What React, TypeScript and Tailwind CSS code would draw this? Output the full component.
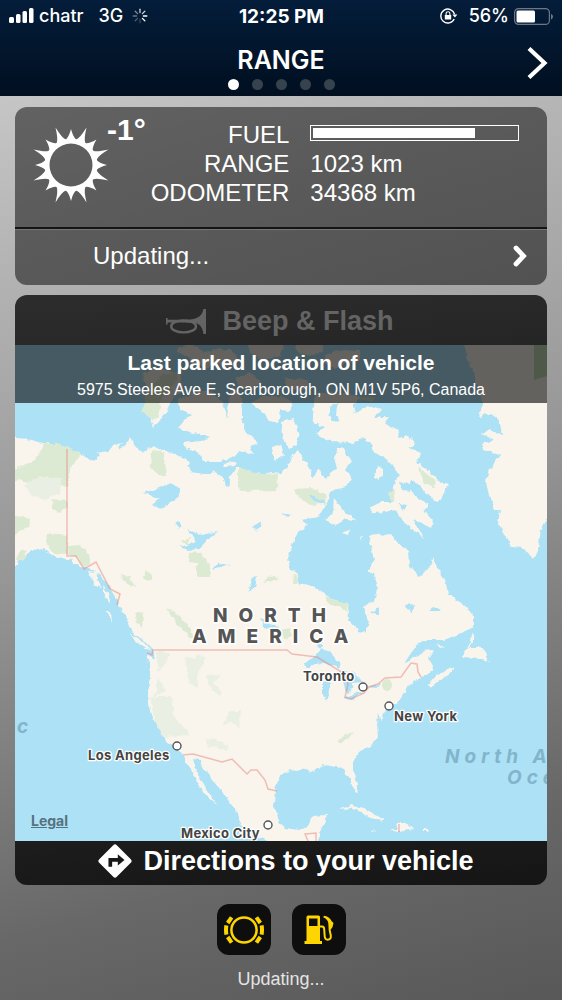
import type { ReactNode } from 'react'

const PAGES = ['Range', 'Doors', 'Climate', 'Trips', 'Settings']

const LAND = [
  // mainland
  'M10 437L33 440L42 443L52 443L60 447L67 449L80 453L88 459L96 461L100 455L97 453L108 451L113 446L122 443L118 449L127 443L130 436L135 446L142 453L145 451L149 449L153 446L160 449L168 452L175 454L182 458L190 462L188 466L190 472L205 474L215 472L222 476L226 484L230 487L229 478L233 474L237 467L246 471L262 474L272 472L281 473L288 466L291 457L299 450L303 459L310 468L313 478L319 468L325 480L331 472L337 468L334 458L338 448L344 447L346 456L352 460L345 470L352 478L346 487L334 490L330 493L326 505L318 517L301 520L308 525L298 532L293 543L288 558L290 570L296 572L299 585L309 584L326 595L334 600L348 603L349 620L361 633L366 632L368 620L363 607L374 600L378 587L374 575L368 570L374 560L371 547L369 537L376 534L383 537L391 534L398 543L408 550L409 567L414 570L419 577L429 568L433 557L439 570L446 583L448 595L463 604L474 615L474 627L461 633L444 640L424 640L414 648L404 664L414 657L428 649L434 652L428 658L433 667L431 673L421 677L418 680L408 685L403 695L399 701L391 705L383 713L381 722L378 713L377 725L378 737L371 745L359 753L353 762L353 770L358 785L357 794L353 787L349 777L344 770L336 767L324 765L318 769L311 772L301 769L286 772L280 777L275 787L274 807L280 823L286 828L298 830L308 827L312 816L327 815L323 825L319 833L319 850L270 850L267 841L250 833L240 823L238 813L230 803L222 790L213 780L205 770L200 760L193 759L197 773L205 787L217 805L208 798L197 783L193 773L187 763L183 755L177 747L167 742L160 728L152 718L148 703L148 690L150 677L150 663L147 654L155 659L153 650L143 640L132 632L127 620L120 607L115 595L107 583L100 575L92 570L80 567L72 560L53 556L43 548L33 550L23 557L17 565L10 566Z',
  // Victoria and Banks islands
  'M177 400L182 410L192 414L184 421L178 428L193 433L210 437L200 441L183 443L185 448L197 452L202 457L202 462L220 462L233 457L240 450L253 454L250 446L259 443L247 433L242 423L242 410L240 390L232 388L229 400L227 419L222 402L212 392L200 391Z',
  'M142 374L158 368L180 374L183 388L172 400L167 411L160 421L153 427L150 418L143 412L148 390Z',
  // high arctic
  'M177 350L190 344L205 352L216 349L232 350L240 362L230 368L214 363L206 368L190 360Z',
  'M247 340L285 340L281 356L262 360L250 352Z',
  'M294 340L322 340L324 352L310 356L298 352Z',
  'M325 355L340 350L361 351L359 362L345 363L335 369L326 364Z',
  'M236 378L250 373L262 382L252 390L240 388Z',
  'M284 378L309 380L307 390L288 389Z',
  'M251 403L262 397L281 396L293 402L290 411L281 410L278 423L270 421L263 412Z',
  'M281 422L293 419L299 433L296 445L289 449L282 437Z',
  'M272 447L281 444L284 455L274 462Z',
  'M225 463L237 461L235 466L224 467Z',
  // Baffin
  'M313 400L318 393L341 392L361 396L353 405L356 413L368 406L381 410L374 417L388 417L384 423L399 430L398 438L409 436L414 443L409 448L421 453L416 460L421 466L430 472L441 483L448 485L438 503L428 495L418 484L410 481L408 488L416 497L429 505L424 510L433 520L431 528L413 519L424 538L411 528L401 520L396 510L384 512L373 513L369 508L381 502L393 502L391 493L396 480L399 477L394 467L384 457L373 452L371 443L363 437L354 443L329 442L316 433L326 428L314 423Z',
  'M374 473L378 466L383 469L383 476L378 479L374 477Z',
  'M334 497L341 508L356 520L344 519L336 526L326 520L333 512Z',
  'M342 533L350 529L348 535Z',
  'M360 537L363 536L361 541Z',
  // Greenland
  'M463 340L468 360L474 373L478 390L483 405L479 416L491 414L498 419L503 435L489 430L482 434L494 440L482 444L483 450L494 453L501 455L494 464L488 472L486 482L488 492L494 510L500 510L498 523L504 533L511 547L524 548L533 559L538 550L541 530L552 510L552 340Z',
  // Atlantic islands
  'M473 632L475 635L469 648L483 648L489 663L481 658L461 657L468 647Z',
  'M436 643L446 648L439 647Z',
  'M428 685L437 675L454 667L450 674L437 682L430 688Z',
  'M339 810L351 805L364 809L378 816L386 821L374 820L361 812L351 808Z',
  'M389 830L398 830L396 823L406 823L414 829L398 832Z',
  'M423 830L429 830L428 832L423 832Z',
  'M370 830L377 831L372 832Z',
  // Pacific islands
  'M130 634L140 639L151 650L146 649L135 641Z',
  'M106 611L111 612L112 623Z',
  'M88 571L96 572L101 588L95 585Z',
  'M103 586L109 594L110 602L105 598Z',
]

const WATER = [
  'M143 493L155 490L170 483L182 488L177 498L163 508L152 505L160 498Z',
  'M180 547L190 544L197 540L187 530L202 535L218 531L208 540L200 549L187 550Z',
  'M211 570L218 563L230 564L221 568Z',
  'M248 592L253 577L257 576L255 588Z',
  'M253 526L262 521L258 532Z',
  'M174 524L178 521L182 526L179 528Z',
  'M223 480L230 480L229 487Z',
  'M260 618L267 620L270 624L279 627L275 631L266 629Z',
  'M371 613L379 607L379 614Z',
  'M405 605L414 604L412 611L406 610Z',
  'M429 611L434 606L441 611Z',
  'M309 495L316 498L326 501L322 504L314 502Z',
  'M281 513L292 515L288 517Z',
  'M329 406L338 402L336 413L340 421L334 422L329 414Z',
  'M399 482L412 484L410 492L402 491Z',
  'M398 502L406 505L404 511Z',
  'M302 665L314 655L319 653L321 648L331 653L339 663L340 668L324 662L309 667Z',
  'M323 683L329 678L331 684L329 695L326 700L323 694Z',
  'M335 673L345 670L358 675L362 682L352 683L349 694L346 693L343 681Z',
  'M344 698L355 693L364 692L351 700Z',
  'M367 687L381 683L376 688Z',
  'M317 644L322 644L321 648L318 648Z',
]

const PARKS = [
  'M43 443L60 444L70 449L82 454L72 465L67 487L50 481L35 480L27 483L20 480L15 482L15 468L25 465L33 462L40 453Z',
  'M52 499L68 501L68 507L60 512L53 509Z',
  'M15 516L30 518L28 527L15 535Z',
  'M47 533L67 535L68 554L53 553L46 543Z',
  'M68 546L80 545L89 554L90 563L84 568L77 557L69 555Z',
  'M18 552L26 550L24 558L17 563Z',
  'M120 575L130 577L135 587L127 585Z',
  'M142 577L147 570L153 579L146 581Z',
  'M134 614L143 612L142 628L137 622Z',
  'M166 608L175 612L192 630L192 639L186 634L175 622Z',
  'M189 553L200 552L203 558L210 563L210 577L197 577L197 564L189 563Z',
  'M262 582L269 576L279 578L278 580Z',
  'M238 467L260 474L278 473L277 490L242 491L238 487Z',
  'M142 412L149 388L163 374L178 372L176 384L162 396L158 416L153 420Z',
  'M152 450L162 451L165 463L167 475L158 475L150 466Z',
  'M293 489L312 488L326 494L325 504L310 505L300 498Z',
  'M418 467L427 474L437 482L434 488L424 482Z',
  'M388 494L395 488L394 502Z',
  'M294 572L299 584L293 584Z',
  'M326 596L334 600L348 603L347 611L341 608L326 603Z',
  'M337 740L345 735L353 732L349 738L340 743Z',
  'M281 630L290 628L292 636L284 639Z',
  'M182 541L190 538L187 545Z',
  'M360 396L376 398L374 402L360 401Z',
]

const FORESTS = [
  'M150 697L172 697L174 717L190 735L163 737L154 720Z',
  'M25 484L40 477L62 478L60 493L45 500L30 495Z',
  'M156 652L170 652L166 664L158 672Z',
  'M185 657L194 658L198 654L205 658L202 666L196 675L187 670Z',
  'M154 697L159 678L166 690Z',
  'M187 670L199 672L197 687L188 682Z',
  'M206 675L220 674L214 684L222 695L216 693L208 684Z',
  'M222 726L230 711L241 711L239 728L232 722Z',
  'M205 738L216 740L228 745L227 752L218 748L208 747Z',
]

const BORDERS = [
  'M67 449V556H76L84 569L96 562L110 589L120 594L117 605',
  'M147 653L152 655L153 650H287L292 654L317 657L340 671L346 676L348 684L345 697L351 699L364 693L369 687L378 684L385 678L401 677L411 663L417 664L418 672L421 677',
  'M183 755L193 754L222 762L232 759L247 774L251 770H257L265 780L268 789L277 791',
  'M316 841V833L305 834L308 841M399 824V832',
]

const CITIES = [
  { name: 'Toronto', x: 363, y: 687, labelX: 303, labelY: 681 },
  { name: 'New York', x: 389, y: 706, labelX: 394, labelY: 721 },
  { name: 'Los Angeles', x: 177, y: 746, labelX: 88, labelY: 760 },
  { name: 'Mexico City', x: 268, y: 825, labelX: 181, labelY: 838 },
]

function SignalBars() {
  return (
    <svg viewBox="0 0 25 16" className="h-4 w-[25px]" fill="white" aria-hidden="true">
      <rect x="0" y="9" width="5" height="6" rx="1.5" />
      <rect x="7" y="6" width="4.5" height="9" rx="1.5" />
      <rect x="13.5" y="3" width="4.5" height="12" rx="1.5" />
      <rect x="20" y="0" width="4.5" height="15" rx="1.5" />
    </svg>
  )
}

function Spinner() {
  const opacities = [0.8, 0.8, 1, 1, 0.2, 0.3, 0.4, 0.5]
  return (
    <svg viewBox="-8 -8 16 16" className="size-4" stroke="white" strokeWidth="1.3" strokeLinecap="round" aria-hidden="true">
      {opacities.map((opacity, i) => (
        <path key={i} d="M0 -3.4V-6.8" opacity={opacity} transform={`rotate(${i * 45})`} />
      ))}
    </svg>
  )
}

function RotationLock() {
  return (
    <svg viewBox="0 0 18 16" className="h-4 w-[18px]" fill="none" stroke="white" strokeWidth="1.4" aria-hidden="true">
      <path d="M14.6 6.2A7 7 0 1 0 14.2 11" />
      <path d="M12.4 6.4H17.4L14.9 9.6Z" fill="white" stroke="none" />
      <rect x="4.8" y="7" width="6.4" height="4.6" rx="0.6" fill="white" stroke="none" />
      <path d="M6.1 7V5.6a1.9 1.9 0 0 1 3.8 0V7" strokeWidth="1.1" />
    </svg>
  )
}

function Battery() {
  return (
    <svg viewBox="0 0 40 17" className="h-[17px] w-10" aria-hidden="true">
      <rect x="0.6" y="0.6" width="34.8" height="15.8" rx="4" fill="none" stroke="#6d7885" strokeWidth="1.2" />
      <rect x="2.5" y="2.6" width="18.5" height="11.8" rx="1.5" fill="white" />
      <path d="M37 6v5.4c2.6-.8 2.6-4.6 0-5.4Z" fill="#6d7885" />
    </svg>
  )
}

function StatusBar() {
  return (
    <div className="grid h-8 grid-cols-[1fr_auto_1fr] items-center pl-[9px] pr-2 font-['Inter',sans-serif] text-[18px] leading-none font-medium">
      <div className="flex items-center gap-[5px]">
        <SignalBars />
        <span>chatr</span>
        <span className="ml-2.5">3G</span>
        <span className="ml-1">
          <Spinner />
        </span>
      </div>
      <span className="text-[19px] font-bold">12:25 PM</span>
      <div className="flex items-center justify-end gap-[5px]">
        <span className="mr-1.5">
          <RotationLock />
        </span>
        <span>56%</span>
        <Battery />
      </div>
    </div>
  )
}

function Header() {
  return (
    <header className="h-24 bg-linear-to-b from-[#041d3a] to-[#010f20] text-white">
      <StatusBar />
      <div className="grid grid-cols-[1fr_auto_1fr] items-center">
        <div className="col-start-2 flex flex-col items-center pt-3">
          <h1 className="font-['Inter',sans-serif] text-[25px] leading-8 font-semibold">RANGE</h1>
          <nav aria-label="Pages" className="mt-[3px] flex gap-[13px]">
            {PAGES.map((page, i) => (
              <button
                key={page}
                type="button"
                aria-label={page}
                className={i === 0 ? 'size-[11px] rounded-full bg-white' : 'size-[11px] rounded-full bg-[#37424f]'}
              />
            ))}
          </nav>
        </div>
        <button type="button" aria-label="Next" className="justify-self-end pt-1 pr-[14px]">
          <svg viewBox="0 0 21 34" className="h-[34px] w-[21px]" fill="none" stroke="white" strokeWidth="4.2">
            <path d="M2 2.5L17.5 17L2 31.5" />
          </svg>
        </button>
      </div>
    </header>
  )
}

function Sun() {
  const points = Array.from({ length: 16 }, (_, i) => {
    const at = (deg: number, r: number) => {
      const a = (deg * Math.PI) / 180
      return `${(Math.sin(a) * r).toFixed(2)} ${(-Math.cos(a) * r).toFixed(2)}`
    }
    const mid = i * 22.5
    const tip = i % 2 ? 40.5 : 36
    return `L${at(mid - 10, 26.5)}Q${at(mid - 4, 28.5)} ${at(mid, tip)}Q${at(mid + 4, 28.5)} ${at(mid + 10, 26.5)}`
  }).join('')

  return (
    <svg viewBox="-38 -38 76 76" className="size-[76px]" aria-hidden="true">
      <path
        fill="white"
        fillRule="evenodd"
        d={`M${points.slice(1)}ZM21.5 0A21.5 21.5 0 1 0 -21.5 0A21.5 21.5 0 1 0 21.5 0Z`}
      />
    </svg>
  )
}

function StatusCard() {
  return (
    <section className="overflow-hidden rounded-xl bg-black/50 text-white">
      <div className="flex h-[120px] items-start gap-[5px] pr-7 pl-[18px]">
        <div className="flex shrink-0 items-start pt-2">
          <span className="pt-3">
            <Sun />
          </span>
          <span className="-ml-0.5 text-[30px] leading-[30px] font-bold">-1°</span>
        </div>
        <dl className="grid flex-1 grid-cols-[auto_1fr] gap-x-[21px] pt-[13px] text-2xl leading-[29px]">
          <dt className="text-right">FUEL</dt>
          <dd className="flex items-center">
            <div
              role="meter"
              aria-label="Fuel level"
              aria-valuenow={80}
              aria-valuemin={0}
              aria-valuemax={100}
              className="-mt-1 h-4 w-full border border-white p-0.5"
            >
              <div className="h-full w-4/5 bg-white" />
            </div>
          </dd>
          <dt className="text-right">RANGE</dt>
          <dd>1023 km</dd>
          <dt className="text-right">ODOMETER</dt>
          <dd>34368 km</dd>
        </dl>
      </div>
      <button
        type="button"
        className="flex h-[58px] w-full items-center justify-between border-t-2 border-[#141414] pr-5 pb-0.5 pl-[78px] text-2xl shadow-[inset_0_1px_0_#757575]"
      >
        Updating...
        <svg viewBox="0 0 14 22" className="h-[22px] w-3.5" fill="none" stroke="white" strokeWidth="4.8" strokeLinecap="round" aria-hidden="true">
          <path d="M3 3L10.5 11L3 19" />
        </svg>
      </button>
    </section>
  )
}

function VehicleMap() {
  return (
    <svg viewBox="15 345 532 496" preserveAspectRatio="xMidYMid slice" className="block size-full bg-[#ade1f6]" role="img" aria-label="Map of North America">
      <filter id="coast" x="0" y="0" width="100%" height="100%" colorInterpolationFilters="sRGB">
        <feTurbulence type="fractalNoise" baseFrequency="0.18" numOctaves="2" seed="4" />
        <feDisplacementMap in="SourceGraphic" scale="5" xChannelSelector="R" yChannelSelector="G" />
      </filter>
      <g filter="url(#coast)">
        <rect x="0" y="330" width="562" height="530" fill="#ade1f6" />
        <path d={LAND.join('')} fill="#f9f5ed" />
        <path d={PARKS.join('')} fill="#dcead3" />
        <path d={FORESTS.join('')} fill="#e9f0e3" />
        <path d={WATER.join('')} fill="#ade1f6" />
      </g>
      <path d="M534 345H547V376L534 380Z" fill="#c5dfb8" />
      <ellipse cx="387" cy="685" rx="5" ry="6" fill="#dcead3" />
      <path d={BORDERS.join('')} fill="none" stroke="#e8867c" strokeOpacity="0.5" strokeWidth="1.5" />

      <g className="font-['Inter',sans-serif] text-[19px] font-extrabold tracking-[11px]" fill="#555" stroke="#fff" strokeWidth="3" paintOrder="stroke">
        <text x="213" y="622">NORTH</text>
        <text x="192" y="643">AMERICA</text>
      </g>
      <g className="font-['Inter',sans-serif] text-[19px] font-bold italic tracking-[5px]" fill="#82b5cb">
        <text x="445" y="763">North A</text>
        <text x="507" y="784">Oce</text>
        <text x="17" y="733">c</text>
      </g>
      {CITIES.map((city) => (
        <g key={city.name}>
          <circle cx={city.x} cy={city.y} r="4" fill="white" stroke="#555" strokeWidth="1.4" />
          <text
            x={city.labelX}
            y={city.labelY}
            fill="#444"
            stroke="#fff"
            strokeWidth="2.5"
            strokeLinejoin="round"
            paintOrder="stroke"
            className="font-['Inter',sans-serif] text-[13px] font-bold tracking-wide"
          >
            {city.name}
          </text>
        </g>
      ))}
    </svg>
  )
}

function Horn() {
  return (
    <svg viewBox="0 0 40 25" className="h-[25px] w-10" fill="none" stroke="currentColor" aria-hidden="true">
      <path d="M0.8 9V15.4" strokeWidth="1.6" />
      <path d="M1 12.2H30" strokeWidth="2.8" />
      <ellipse cx="17.6" cy="17.4" rx="12.4" ry="6" strokeWidth="2.4" />
      <path d="M20 10.8C29 10.8 36 8.5 37.4 0H40V25H37.4C36.5 17.5 33 14.2 27 13.6H20Z" fill="currentColor" stroke="none" />
    </svg>
  )
}

function DirectionSign() {
  return (
    <svg viewBox="0 0 34 34" className="size-[34px]" aria-hidden="true">
      <rect x="4.6" y="4.6" width="24.8" height="24.8" rx="2.5" fill="white" transform="rotate(45 17 17)" />
      <path d="M12.3 22.8V15.9H20.5" fill="none" stroke="#191919" strokeWidth="3.7" />
      <path d="M19.8 10.3L26.5 15.9L19.8 21.5Z" fill="#191919" />
    </svg>
  )
}

function LocationCard() {
  return (
    <section className="mt-2.5 overflow-hidden rounded-xl text-white">
      <button
        type="button"
        disabled
        className="flex h-[50px] w-full items-center justify-center gap-4 bg-linear-to-br from-[#2d2d2d] to-[#252525] pt-0.5 pr-0.5 text-[27px] font-bold text-[#646464]"
      >
        <Horn />
        Beep &amp; Flash
      </button>
      <div className="relative aspect-[532/496] w-full">
        <VehicleMap />
        <div className="absolute inset-x-0 top-0 flex flex-col items-center bg-black/60 pt-1.5 pb-[3px] text-center">
          <h2 className="text-[21px] leading-6 font-bold">Last parked location of vehicle</h2>
          <p className="mt-[5px] text-base leading-5">5975 Steeles Ave E, Scarborough, ON M1V 5P6, Canada</p>
        </div>
        <a
          href="#legal"
          className="absolute bottom-2.5 left-4 font-['Inter',sans-serif] text-[14px] leading-5 font-bold text-[#56727e] underline"
        >
          Legal
        </a>
      </div>
      <button
        type="button"
        className="flex h-11 w-full items-center justify-center gap-[11px] bg-linear-to-br from-[#1d1d1d] to-[#151515] pb-1 pl-2.5 text-[27px] font-bold"
      >
        <DirectionSign />
        Directions to your vehicle
      </button>
    </section>
  )
}

function WarningLight({ label, children }: { label: string; children: ReactNode }) {
  return (
    <div role="img" aria-label={label} className="flex h-[51px] w-[54px] items-center justify-center rounded-xl bg-[#0e0e0e]">
      {children}
    </div>
  )
}

function BrakeIcon() {
  const side = (
    <g strokeWidth="4">
      <path d="M12.4 -12.6L16.3 -7" />
      <path d="M17.6 -4.6Q18.4 0 17.6 4.6" />
      <path d="M16.3 7L12.4 12.6" />
    </g>
  )
  return (
    <svg viewBox="-20 -15 40 30" className="h-[30px] w-10" fill="none" stroke="#ffd500">
      <circle r="12.6" strokeWidth="2.5" />
      {side}
      <g transform="scale(-1 1)">{side}</g>
    </svg>
  )
}

function FuelIcon() {
  return (
    <svg viewBox="0 0 30 30" className="size-[30px]" fill="#ffd500">
      <path fillRule="evenodd" d="M4 .5H14.5Q16 .5 16 2V26H2.500V2Q2.500 .5 4 .5ZM5 3.500V11H13.5V3.500Z" />
      <path d="M.5 26H18V29H.5Z" />
      <path d="M16 11.5H18Q20 11.5 20.2 14L20.7 21.5Q21 24.7 23.500 24.7Q27.3 24.7 26.8 20.5L25.6 15L26 9" fill="none" stroke="#ffd500" strokeWidth="2" />
      <path d="M19.800 .8Q25.500 1.5 27.5 6L29.500 8L28.500 12L26.8 14.5L24.8 13.5L24.2 7.500Q23.2 4 19.4 2.6Z" />
    </svg>
  )
}

export default function App() {
  return (
    <div className="flex min-h-screen flex-col bg-[linear-gradient(165deg,#d0d0d0_0%,#b5b5b5_22%,#979797_50%,#686868_82%,#585858_100%)] font-['Liberation_Sans',Arial,sans-serif]">
      <Header />
      <main className="px-[15px] pt-[11px]">
        <StatusCard />
        <LocationCard />
      </main>
      <footer className="flex flex-col items-center pt-[19px] text-[#e4e4e4]">
        <div className="flex gap-[21px]">
          <WarningLight label="Brake warning">
            <BrakeIcon />
          </WarningLight>
          <WarningLight label="Low fuel">
            <FuelIcon />
          </WarningLight>
        </div>
        <p className="mt-3 text-lg leading-6">Updating...</p>
      </footer>
    </div>
  )
}
